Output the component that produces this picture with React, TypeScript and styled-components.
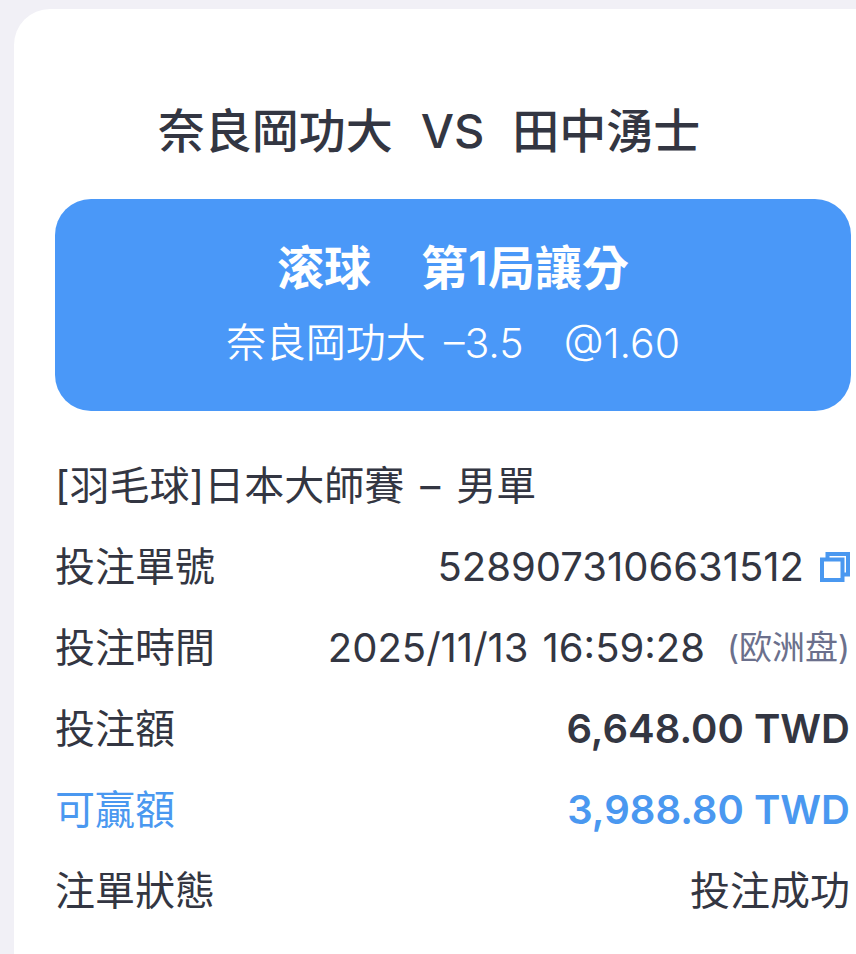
import React from "react";
import styled, { createGlobalStyle } from "styled-components";

const Global = createGlobalStyle`
  * { box-sizing: border-box; }
  body {
    margin: 0;
    background: #f1f0f6;
    color: #333642;
    font-family: Inter, "Noto Sans CJK TC", sans-serif;
  }
`;

const Page = styled.main`
  padding: 9px 0 0 14px;
`;

const Ticket = styled.article`
  min-height: calc(100vh - 9px);
  padding: 87px 5px 32px 41px;
  background: #fff;
  border-top-left-radius: 36px;
`;

const Match = styled.h1`
  display: flex;
  justify-content: center;
  gap: 28px;
  margin: 0 48px 33px 0;
  font-size: 47px;
  line-height: 70px;
  font-weight: 500;
  white-space: nowrap;
`;

const Pick = styled.section`
  display: flex;
  flex-direction: column;
  align-items: center;
  padding: 34px 16px 38px;
  border-radius: 36px;
  background: #4a98f8;
  color: #fff;
  white-space: nowrap;
`;

const Market = styled.h2`
  display: flex;
  gap: 50px;
  margin: 0 0 10px;
  font-size: 47px;
  line-height: 70px;
  font-weight: 600;
`;

const Selection = styled.p`
  display: flex;
  margin: 0;
  font-size: 41px;
  line-height: 60px;
  font-weight: 350;
`;

const Team = styled.span`
  margin-right: 18px;
  font-size: 40px;
`;

const Odds = styled.span`
  margin-left: 40px;
`;

const League = styled.p`
  display: flex;
  gap: 16px;
  margin: 34px 0 0;
  font-size: 40px;
  line-height: 81px;
  white-space: nowrap;
`;

const Details = styled.dl`
  margin: 0;
  padding-right: 1px;
`;

const Row = styled.div<{ $accent?: boolean }>`
  display: flex;
  justify-content: space-between;
  font-size: 40px;
  line-height: 81px;
  white-space: nowrap;
  color: ${(p) => (p.$accent ? "#4a98f0" : "inherit")};
`;

const Label = styled.dt``;

const Value = styled.dd<{ $strong?: boolean }>`
  display: flex;
  align-items: center;
  margin: 0;
  font-weight: ${(p) => (p.$strong ? 600 : 400)};
`;

const Moment = styled.time`
  display: flex;
  gap: 14px;
`;

const Zone = styled.span`
  margin-left: 22px;
  color: #6b708c;
  font-size: 33px;
`;

const CopyButton = styled.button`
  display: flex;
  margin-left: 16px;
  padding: 0;
  border: 0;
  background: none;
  color: #4a98f0;
  cursor: pointer;
`;

const CopyIcon = () => (
  <svg width="30" height="30" viewBox="0 0 30 30" fill="none" stroke="currentColor" strokeWidth="4" aria-hidden="true">
    <path d="M2 7.5h20.5V28H2z" />
    <path d="M7.5 7V2H28v20.5h-5" />
  </svg>
);

export default function App() {
  return (
    <>
      <Global />
      <Page>
        <Ticket>
          <Match>
            <span>奈良岡功大</span>
            <span>VS</span>
            <span>田中湧士</span>
          </Match>
          <Pick>
            <Market>
              <span>滚球</span>
              <span>第1局讓分</span>
            </Market>
            <Selection>
              <Team>奈良岡功大</Team>
              <span>–3.5</span>
              <Odds>@1.60</Odds>
            </Selection>
          </Pick>
          <League>
            <span>[羽毛球]日本大師賽</span>
            <span>–</span>
            <span>男單</span>
          </League>
          <Details>
            <Row>
              <Label>投注單號</Label>
              <Value>
                5289073106631512
                <CopyButton type="button" aria-label="複製">
                  <CopyIcon />
                </CopyButton>
              </Value>
            </Row>
            <Row>
              <Label>投注時間</Label>
              <Value>
                <Moment dateTime="2025-11-13T16:59:28">
                  <span>2025/11/13</span>
                  <span>16:59:28</span>
                </Moment>
                <Zone>(欧洲盘)</Zone>
              </Value>
            </Row>
            <Row>
              <Label>投注額</Label>
              <Value $strong>6,648.00 TWD</Value>
            </Row>
            <Row $accent>
              <Label>可贏額</Label>
              <Value $strong>3,988.80 TWD</Value>
            </Row>
            <Row>
              <Label>注單狀態</Label>
              <Value>投注成功</Value>
            </Row>
          </Details>
        </Ticket>
      </Page>
    </>
  );
}
